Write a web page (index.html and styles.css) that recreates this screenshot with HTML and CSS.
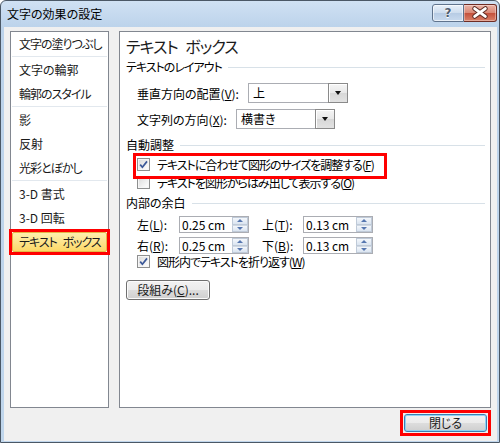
FILE: index.html
```html
<!DOCTYPE html>
<html lang="ja">
<head>
<meta charset="utf-8">
<title>文字の効果の設定</title>
<link rel="stylesheet" href="styles.css">
</head>
<body>
<div class="window">
  <div class="titlebar">
    <div class="title">文字の効果の設定</div>
    <div class="caption-buttons">
      <div class="cbtn help">?</div>
      <div class="cbtn close">
        <svg width="33" height="18" viewBox="0 0 33 18">
          <path d="M11 4.5 L22 12.5 M22 4.5 L11 12.5" stroke="#5a2a22" stroke-width="5" stroke-linecap="round" fill="none"/>
          <path d="M11 4.5 L22 12.5 M22 4.5 L11 12.5" stroke="#ffffff" stroke-width="3" stroke-linecap="round" fill="none"/>
        </svg>
      </div>
    </div>
  </div>
  <div class="client">
    <div class="panes">
      <ul class="nav">
        <li class="item kana">文字の塗りつぶし</li>
        <li class="sep"></li>
        <li class="item">文字の輪郭</li>
        <li class="item kana">輪郭のスタイル</li>
        <li class="sep"></li>
        <li class="item">影</li>
        <li class="item">反射</li>
        <li class="item kana">光彩とぼかし</li>
        <li class="sep"></li>
        <li class="item">3-D 書式</li>
        <li class="item">3-D 回転</li>
        <li class="item selected"><span class="hl kana">テキスト ボックス</span></li>
      </ul>
      <div class="content">
        <h1 class="heading">テキスト ボックス</h1>
        <div class="group kana">テキストのレイアウト</div>
        <div class="field-row r1">
          <span class="label w-v">垂直方向の配置(<u>V</u>):</span>
          <div class="combo c1"><span class="value">上</span><span class="drop"></span></div>
        </div>
        <div class="field-row r2">
          <span class="label w-x">文字列の方向(<u>X</u>):</span>
          <div class="combo c2"><span class="value">横書き</span><span class="drop"></span></div>
        </div>
        <div class="group g2">自動調整</div>
        <div class="check-row first">
          <span class="box"><svg width="11" height="11" viewBox="0 0 11 11"><path d="M2.2 5.6 L4.4 8.2 L9 2.4" stroke="#3b5898" stroke-width="1.7" fill="none"/></svg></span>
          <span class="kana">テキストに合わせて図形のサイズを調整する(<u>F</u>)</span>
        </div>
        <div class="check-row">
          <span class="box"></span>
          <span class="kana">テキストを図形からはみ出して表示する(<u>O</u>)</span>
        </div>
        <div class="group g3">内部の余白</div>
        <div class="spin-row sr1">
          <span class="slabel">左(<u>L</u>):</span>
          <div class="spin"><span class="num">0.25 cm</span><span class="arrows"><i class="up"></i><i class="down"></i></span></div>
          <span class="slabel second">上(<u>T</u>):</span>
          <div class="spin"><span class="num">0.13 cm</span><span class="arrows"><i class="up"></i><i class="down"></i></span></div>
        </div>
        <div class="spin-row sr2">
          <span class="slabel">右(<u>R</u>):</span>
          <div class="spin"><span class="num">0.25 cm</span><span class="arrows"><i class="up"></i><i class="down"></i></span></div>
          <span class="slabel second">下(<u>B</u>):</span>
          <div class="spin"><span class="num">0.13 cm</span><span class="arrows"><i class="up"></i><i class="down"></i></span></div>
        </div>
        <div class="check-row wrap">
          <span class="box"><svg width="11" height="11" viewBox="0 0 11 11"><path d="M2.2 5.6 L4.4 8.2 L9 2.4" stroke="#3b5898" stroke-width="1.7" fill="none"/></svg></span>
          <span class="kana">図形内でテキストを折り返す(<u>W</u>)</span>
        </div>
        <button class="btn columns">段組み(<u>C</u>)...</button>
      </div>
    </div>
    <div class="footer">
      <div class="mark"><button class="btn default">閉じる</button></div>
    </div>
  </div>
</div>
</body>
</html>
```

FILE: styles.css
```css
* { box-sizing: border-box; }
html, body { margin: 0; padding: 0; }
body {
  width: 500px;
  height: 443px;
  overflow: hidden;
  background: #ffffff;
  font-family: "Noto Sans CJK JP", "Noto Sans", sans-serif;
  font-size: 12px;
  color: #000;
  font-feature-settings: "palt";
}
.kana { letter-spacing: -1px; word-spacing: 4px; }
.window {
  width: 500px;
  height: 443px;
  border: 1px solid #4b5866;
  border-radius: 6px 6px 0 0;
  background: linear-gradient(#d0e1f3, #bcd3eb 26px, #c0d6ec);
  display: flex;
  flex-direction: column;
}
.titlebar {
  height: 26px;
  flex: none;
  display: flex;
  align-items: flex-start;
  padding-right: 2px;
}
.title {
  line-height: 25px;
  padding-left: 6px;
  font-size: 12px;
}
.caption-buttons {
  margin-left: auto;
  margin-top: 3px;
  display: flex;
}
.cbtn {
  height: 18px;
  border: 1px solid #5f738d;
  display: flex;
  align-items: center;
  justify-content: center;
}
.help {
  width: 32px;
  border-radius: 3px 0 0 3px;
  background: linear-gradient(#e8f0fa, #cddcee 50%, #b6cbe4 51%, #c9daee);
  box-shadow: inset 0 0 0 1px rgba(255,255,255,0.6);
  font-family: "DejaVu Sans", sans-serif;
  font-weight: bold;
  font-size: 12px;
  color: #4e5d70;
  text-shadow: 0 0 1px #fff, 0 1px 0 #fff;
}
.close {
  width: 33px;
  border-left: none;
  border-color: #6e2c24;
  border-radius: 0 3px 3px 0;
  background: linear-gradient(#ebb3a6, #d98774 50%, #c4503b 51%, #d98068);
  box-shadow: inset 0 0 0 1px rgba(255,255,255,0.35);
}
.close svg { display: block; }
.client {
  flex: 1;
  margin: 0 2px 1px 3px;
  background: #f0f0f0;
  padding: 4px 6px 0 6px;
  display: flex;
  flex-direction: column;
}
.panes {
  display: flex;
  gap: 10px;
  height: 377px;
  flex: none;
}
.nav {
  width: 99px;
  margin: 0;
  padding: 0;
  list-style: none;
  background: #fff;
  border: 1px solid #828790;
}
.item {
  height: 24px;
  line-height: 24px;
  padding-left: 8px;
  white-space: nowrap;
  color: #1a1a1a;
}
.sep {
  height: 2px;
  margin: 0 1px;
  border-top: 1px solid #e2e8ee;
}
.item.selected {
  padding: 2px 1px;
}
.hl {
  display: block;
  position: relative;
  height: 20px;
  line-height: 18px;
  padding-left: 6px;
  border: 1px solid #e3b847;
  border-radius: 2px;
  background: linear-gradient(#fef0ad, #fde48c 50%, #fdd867 100%);
}
.hl::after {
  content: "";
  position: absolute;
  left: -4px;
  top: -4px;
  right: -4px;
  bottom: -4px;
  border: 3px solid #ff0000;
}
.content {
  width: 372px;
  background: #fff;
  border: 1px solid #828790;
  padding: 0 5px 0 6px;
}
.heading {
  margin: 3px 0 0;
  height: 23px;
  line-height: 23px;
  font-size: 16px;
  letter-spacing: -1px;
  word-spacing: 5px;
  font-weight: normal;
  color: #1b1b1b;
  white-space: nowrap;
}
.group {
  display: flex;
  align-items: center;
  height: 16px;
  line-height: 16px;
  margin-top: 1px;
  white-space: nowrap;
}
.group::after {
  content: "";
  flex: 1;
  height: 1px;
  background: #d8e1e8;
  margin-left: 6px;
}
.g2 { margin-top: 8px; }
.g3 { margin-top: 4px; }
.field-row {
  display: flex;
  align-items: center;
  height: 20px;
  margin-left: 11px;
  white-space: nowrap;
}
.r1 { margin-top: 8px; }
.r2 { margin-top: 6px; }
.w-v { width: 111px; }
.w-x { width: 99px; }
.combo {
  display: flex;
  height: 20px;
}
.c1 { width: 100px; }
.c2 { width: 99px; }
.combo .value {
  flex: 1;
  border: 1px solid #abadb3;
  border-right: none;
  background: #fff;
  padding-left: 4px;
  line-height: 18px;
}
.drop {
  width: 20px;
  border: 1px solid #8a8a8a;
  background: linear-gradient(#f5f5f5, #e8e8e8 50%, #d7d7d7 51%, #e2e2e2);
  box-shadow: inset 1px 1px 0 #fff;
  display: flex;
  align-items: center;
  justify-content: center;
}
.drop::before {
  content: "";
  border-left: 3.5px solid transparent;
  border-right: 3.5px solid transparent;
  border-top: 4px solid #111;
}
.check-row {
  display: flex;
  align-items: center;
  height: 18px;
  margin-left: 11px;
  white-space: nowrap;
}
.first {
  margin-top: 2px;
  position: relative;
}
.first::after {
  content: "";
  position: absolute;
  left: -4px;
  top: -2px;
  width: 248px;
  height: 20px;
  border: 3px solid #ff0000;
}
.wrap {
  margin-top: -1px;
  height: 16px;
}
.box {
  flex: none;
  width: 13px;
  height: 13px;
  margin-right: 7px;
  border: 1px solid #8e8f8f;
  background: linear-gradient(135deg, #d9d9d9, #f9f9f9 80%);
  box-shadow: inset 0 0 0 1px #f6f6f6;
  display: flex;
  align-items: center;
  justify-content: center;
}
.box svg { display: block; }
.spin-row {
  display: flex;
  align-items: center;
  height: 17px;
  margin-left: 11px;
  white-space: nowrap;
}
.sr1 { margin-top: 5px; }
.sr2 { margin-top: 4px; }
.slabel { width: 42px; }
.slabel.second { width: 41px; margin-left: 13px; }
.spin {
  width: 70px;
  height: 17px;
  border: 1px solid #abadb3;
  background: #fff;
  display: flex;
  align-items: center;
  padding-left: 2px;
}
.num {
  flex: 1;
  line-height: 15px;
  font-size: 12px;
}
.arrows {
  width: 16px;
  height: 15px;
  display: flex;
  flex-direction: column;
}
.arrows i {
  flex: 1;
  border: 1px solid #bfcad8;
  background: linear-gradient(#f4f7fb, #dae4f0);
  display: flex;
  align-items: center;
  justify-content: center;
}
.arrows i + i { border-top-color: #cfd8e3; }
.up::before {
  content: "";
  border-left: 3px solid transparent;
  border-right: 3px solid transparent;
  border-bottom: 3px solid #5677b0;
}
.down::before {
  content: "";
  border-left: 3px solid transparent;
  border-right: 3px solid transparent;
  border-top: 3px solid #5677b0;
}
.btn {
  font-family: inherit;
  font-size: 12px;
  font-feature-settings: "palt";
  color: #1a1a1a;
  border: 1px solid #707070;
  border-radius: 3px;
  background: linear-gradient(#f2f2f2, #ebebeb 50%, #dddddd 51%, #cfcfcf);
  box-shadow: inset 0 0 0 1px #fbfbfb;
  padding: 0;
  display: block;
  line-height: 16px;
  text-align: center;
}
.columns {
  margin-top: 11px;
  width: 84px;
  height: 20px;
}
.footer {
  display: flex;
  justify-content: flex-end;
  margin-top: 2px;
}
.mark {
  border: 3px solid #ff0000;
  padding: 1px;
}
.btn.default {
  width: 83px;
  height: 18px;
  border-color: #3c7fb1;
  box-shadow: inset 0 0 0 1px #8fd3f4;
}
```
